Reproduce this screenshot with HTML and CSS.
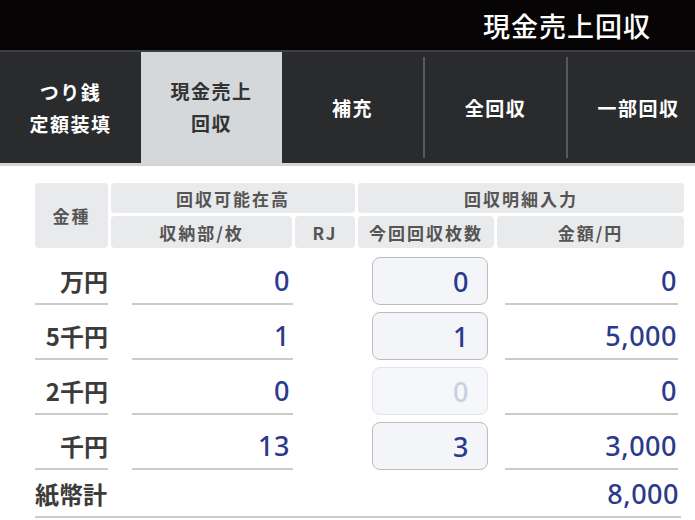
FILE: index.html
```html
<!DOCTYPE html>
<html lang="ja">
<head>
    <meta charset="UTF-8">
    <meta name="viewport" content="width=device-width, initial-scale=1.0">
    <title>現金売上回収</title>
    <link rel="stylesheet" href="styles.css">
</head>
<body>

    <div class="titlebar">現金売上回収</div>

    <div class="tabs">
        <div class="tab">つり銭<br>定額装填</div>
        <div class="tab active">現金売上<br>回収</div>
        <div class="tab">補充</div>
        <span class="tab-sep"></span>
        <div class="tab">全回収</div>
        <span class="tab-sep"></span>
        <div class="tab">一部回収</div>
    </div>

    <div class="content">
        <div class="table-head">
            <div class="th th-kind">金種</div>
            <div class="th th-stock">回収可能在高</div>
            <div class="th th-detail">回収明細入力</div>
            <div class="th">収納部/枚</div>
            <div class="th">RJ</div>
            <div class="th">今回回収枚数</div>
            <div class="th">金額/円</div>
        </div>

        <div class="rows">
            <div class="row">
                <div class="cell label">万円</div>
                <div class="cell count">0</div>
                <div class="qty">0</div>
                <div class="cell amount">0</div>
            </div>
            <div class="row">
                <div class="cell label">5千円</div>
                <div class="cell count">1</div>
                <div class="qty">1</div>
                <div class="cell amount">5,000</div>
            </div>
            <div class="row">
                <div class="cell label">2千円</div>
                <div class="cell count">0</div>
                <div class="qty disabled">0</div>
                <div class="cell amount">0</div>
            </div>
            <div class="row">
                <div class="cell label">千円</div>
                <div class="cell count">13</div>
                <div class="qty">3</div>
                <div class="cell amount">3,000</div>
            </div>

            <div class="total">
                <span class="total-label">紙幣計</span>
                <span class="total-value">8,000</span>
            </div>
        </div>
    </div>

</body>
</html>
```

FILE: styles.css
```css
body {
    margin: 0;
    padding: 0;
    background-color: #fff;
    font-family: "Noto Sans CJK JP", "Noto Sans", sans-serif;
    overflow: hidden;
}
.titlebar {
    height: 50px;
    background-color: #070405;
    color: #fff;
    font-size: 27px;
    font-weight: 500;
    letter-spacing: 1px;
    display: flex;
    align-items: center;
    justify-content: flex-end;
    padding-right: 44px;
}
.tabs {
    display: flex;
    align-items: stretch;
    height: 111px;
    background-color: #2a2b2d;
    border-top: 2px solid #3e3e40;
    border-bottom: 3px solid #d4d5d7;
    overflow: hidden;
}
.tab {
    flex: 0 0 141px;
    display: flex;
    align-items: center;
    justify-content: center;
    text-align: center;
    color: #fff;
    font-size: 19px;
    font-weight: bold;
    letter-spacing: 1.5px;
    line-height: 32px;
}
.tab.active {
    background-color: #d5d8db;
    color: #333;
    margin-top: -2px;
}
.tab-sep {
    flex: 0 0 2px;
    margin: 5px 0;
    background-color: #58595b;
}
.content {
    padding: 17px 0 0 35px;
}
.table-head {
    display: grid;
    grid-template-columns: 73px 181px 60px 136px 187px;
    grid-template-rows: 30px 32px;
    gap: 3px;
}
.th {
    background-color: #e9eaec;
    border-radius: 4px;
    color: #555;
    font-size: 17px;
    font-weight: bold;
    letter-spacing: 2px;
    display: flex;
    align-items: center;
    justify-content: center;
}
.th-kind {
    grid-row: span 2;
}
.th-stock {
    grid-column: span 2;
}
.th-detail {
    grid-column: span 2;
}
.rows {
    margin-top: 2px;
}
.row {
    display: flex;
    align-items: flex-end;
    height: 55px;
}
.cell {
    height: 46px;
    border-bottom: 2px solid #cbcbcb;
    display: flex;
    align-items: center;
    justify-content: flex-end;
}
.label {
    width: 73px;
    color: #3b3b3b;
    font-size: 24px;
    font-weight: bold;
}
.count, .amount, .qty, .total-value {
    font-family: "Noto Sans", sans-serif;
    font-size: 27px;
    font-weight: 500;
    color: #2b3a8c;
    letter-spacing: 0.5px;
}
.count {
    width: 158px;
    margin-left: 24px;
    padding-right: 3px;
}
.qty {
    box-sizing: border-box;
    width: 116px;
    height: 48px;
    margin-left: 79px;
    padding-right: 18px;
    border: 1.5px solid #bdbdbd;
    border-radius: 8px;
    background-color: #f4f5f9;
    display: flex;
    align-items: center;
    justify-content: flex-end;
}
.qty.disabled {
    border-color: #e4e4e6;
    background-color: #f6f7fa;
    color: #cbd0e0;
}
.amount {
    width: 172px;
    margin-left: 17px;
    padding-right: 1px;
}
.total {
    width: 644px;
    height: 46px;
    display: flex;
    align-items: center;
    justify-content: space-between;
    border-bottom: 2px solid #cbcbcb;
    padding-right: 2px;
}
.total-label {
    color: #3b3b3b;
    font-size: 24px;
    font-weight: bold;
}
```
